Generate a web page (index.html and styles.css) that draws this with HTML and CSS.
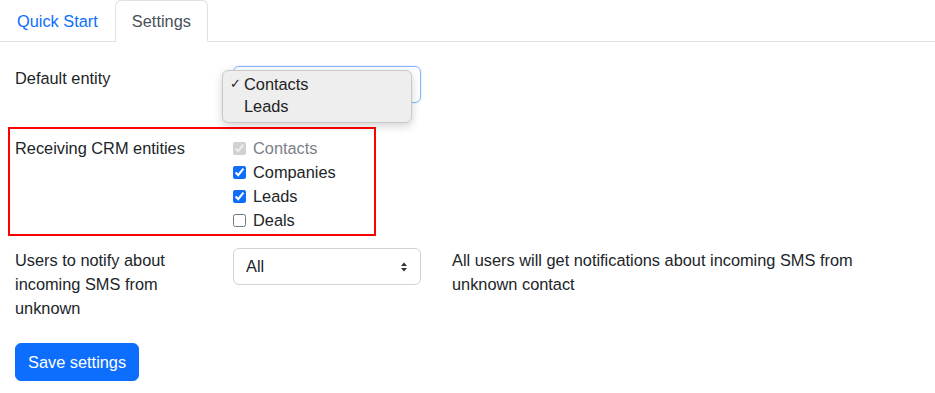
FILE: index.html
```html
<!DOCTYPE html>
<html lang="en">
<head>
    <meta charset="UTF-8">
    <meta name="viewport" content="width=device-width, initial-scale=1.0">
    <title>Settings</title>
    <link rel="stylesheet" href="styles.css">
</head>
<body>

    <ul class="nav-tabs">
        <li><a href="#" class="nav-link">Quick Start</a></li>
        <li><a href="#" class="nav-link active">Settings</a></li>
    </ul>

    <div class="content">
        <div class="form-row">
            <label class="form-label" for="defaultEntity">Default entity</label>
            <div class="select-wrap">
                <select id="defaultEntity" class="form-select focused">
                    <option>Contacts</option>
                    <option>Leads</option>
                </select>
                <!-- open dropdown as shown in the screenshot -->
                <ul class="select-popup">
                    <li><span class="tick">&#10003;</span>Contacts</li>
                    <li>Leads</li>
                </ul>
            </div>
        </div>

        <div class="form-row highlight">
            <span class="form-label">Receiving CRM entities</span>
            <div class="check-list">
                <label class="check disabled"><input type="checkbox" checked disabled>Contacts</label>
                <label class="check"><input type="checkbox" checked>Companies</label>
                <label class="check"><input type="checkbox" checked>Leads</label>
                <label class="check"><input type="checkbox">Deals</label>
            </div>
        </div>

        <div class="form-row">
            <label class="form-label narrow" for="notifyUsers">Users to notify about incoming SMS from unknown</label>
            <div class="select-wrap">
                <select id="notifyUsers" class="form-select">
                    <option>All</option>
                </select>
                <svg class="select-arrows" width="8" height="12" viewBox="0 0 8 12">
                    <path d="M1 5 L4 1.5 L7 5 Z" fill="#333"/>
                    <path d="M1 7 L4 10.5 L7 7 Z" fill="#333"/>
                </svg>
            </div>
            <p class="form-text">All users will get notifications about incoming SMS from unknown contact</p>
        </div>

        <button class="btn-primary">Save settings</button>
    </div>

</body>
</html>
```

FILE: styles.css
```css
body {
    margin: 0;
    font-family: 'Liberation Sans', Arial, sans-serif;
    font-size: 16.35px;
    line-height: 24px;
    color: #212529;
    background-color: #fff;
}

.nav-tabs {
    display: flex;
    list-style: none;
    margin: 0;
    padding: 0;
    border-bottom: 1px solid #dee2e6;
}

.nav-link {
    display: block;
    padding: 8px 16px;
    margin-bottom: -1px;
    border: 1px solid transparent;
    border-radius: 6px 6px 0 0;
    color: #0d6efd;
    text-decoration: none;
}

.nav-link.active {
    color: #495057;
    background-color: #fff;
    border-color: #dee2e6 #dee2e6 #fff;
}

.content {
    padding: 24px 15px 0;
}

.form-row {
    display: grid;
    grid-template-columns: 218px 219px 440px;
    align-items: start;
}

.form-label {
    display: block;
}

.narrow {
    padding-right: 20px;
}

.select-wrap {
    position: relative;
    width: 188px;
}

.form-select {
    display: block;
    width: 188px;
    height: 37px;
    padding: 5px 36px 6px 12px;
    font-family: inherit;
    font-size: 16.35px;
    line-height: 24px;
    color: #212529;
    background-color: #fff;
    border: 1px solid #ced4da;
    border-radius: 6px;
    appearance: none;
    -webkit-appearance: none;
}

.form-select.focused {
    border-color: #86b7fe;
    box-shadow: 0 0 0 1px rgba(13, 110, 253, 0.08);
}

.select-arrows {
    position: absolute;
    right: 13px;
    top: 13px;
}

.select-popup {
    position: absolute;
    left: -11px;
    top: 4px;
    width: 188px;
    margin: 0;
    padding: 2px 0 5px;
    list-style: none;
    background-color: #eeeeee;
    border: 1px solid #c9c9c9;
    border-radius: 6px;
    box-shadow: 0 3px 10px rgba(0, 0, 0, 0.18);
    color: #222;
}

.select-popup li {
    height: 22px;
    line-height: 22px;
    padding-left: 21px;
    position: relative;
}

.tick {
    position: absolute;
    left: 7px;
    font-size: 13px;
}

.highlight {
    margin: 24px 0 12px -7px;
    padding: 7px 0 2px 5px;
    width: 359px;
    border: 2px solid #ff0000;
    grid-template-columns: 218px 141px;
}

.check-list {
    display: flex;
    flex-direction: column;
}

.check {
    display: flex;
    align-items: center;
    height: 24px;
}

.check input {
    width: 13px;
    height: 13px;
    margin: 1px 7px 0 0;
    accent-color: #0d6efd;
}

.check.disabled {
    color: #7b8188;
}

.form-text {
    margin: 0;
    width: 430px;
}

.btn-primary {
    margin-top: 23px;
    padding: 6px 12px;
    font-family: inherit;
    font-size: 16.35px;
    line-height: 24px;
    color: #fff;
    background-color: #0d6efd;
    border: 1px solid #0d6efd;
    border-radius: 6px;
    cursor: pointer;
}
```
